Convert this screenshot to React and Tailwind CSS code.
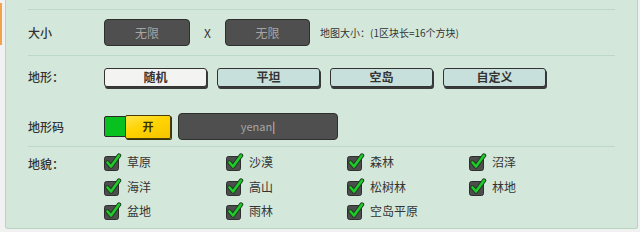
import React from 'react';

function Check() {
  return (
    <svg width="20" height="18" viewBox="0 0 20 18" className="shrink-0">
      <rect x="0.5" y="3.5" width="14" height="14" rx="2" fill="#4d4d4d" stroke="#2e2e2e" strokeWidth="1" />
      <path d="M3.5 9.5 L7 13.5 L15 2.5" fill="none" stroke="#1f3a1f" strokeWidth="4.4" strokeLinecap="round" strokeLinejoin="round" />
      <path d="M3.5 9.5 L7 13.5 L15 2.5" fill="none" stroke="#1ecb2a" strokeWidth="2.6" strokeLinecap="round" strokeLinejoin="round" />
    </svg>
  );
}

function Biome({ name }) {
  return (
    <div className="flex items-center gap-[3px] h-[18px]">
      <Check />
      <span className="text-[12px] leading-none text-[#333]">{name}</span>
    </div>
  );
}

export default function App() {
  const terrains = ['随机', '平坦', '空岛', '自定义'];
  const biomes = ['草原', '沙漠', '森林', '沼泽', '海洋', '高山', '松树林', '林地', '盆地', '雨林', '空岛平原'];

  return (
    <div
      className="relative w-[640px] h-[232px] bg-[#f1f1f1] overflow-hidden"
      style={{ fontFamily: '"Noto Sans CJK SC", "Noto Sans", sans-serif' }}
    >
      <div className="absolute left-0 top-[3px] w-[2px] h-[42px] bg-[#f2a24a]" />

      <div className="ml-[5px] w-[633px] h-[229px] bg-[#d3e8db] border-x border-b border-[#b9d3c3] rounded-b-[3px] pl-[22px] pr-[22px]">
        <div className="h-[9px]" />
        <div className="h-px bg-[#bcd8c7]" />

        {/* size row */}
        <div className="flex items-center mt-[9px] h-[27px]">
          <div className="w-[76px] text-[12px] font-medium text-[#333]">大小</div>
          <div className="w-[86px] h-[27px] flex items-center justify-center bg-[#4f4f4f] border border-[#2f2f2f] rounded-[4px] text-[12px] text-[#a5a5a5]">无限</div>
          <div className="w-[35px] text-center text-[12px] text-[#333]">X</div>
          <div className="w-[85px] h-[27px] flex items-center justify-center bg-[#4f4f4f] border border-[#2f2f2f] rounded-[4px] text-[12px] text-[#a5a5a5]">无限</div>
          <div className="ml-[10px] text-[10px] text-[#333] whitespace-nowrap">地图大小：(1区块长=16个方块)</div>
        </div>

        <div className="h-px bg-[#bcd8c7] mt-[9px]" />

        {/* terrain row */}
        <div className="flex items-center mt-[11px] h-[20px]">
          <div className="w-[76px] text-[12px] font-medium text-[#333]">地形：</div>
          <div className="flex gap-[10px]">
            {terrains.map((t, i) => (
              <div
                key={t}
                className={
                  'w-[103px] h-[19px] flex items-center justify-center rounded-[3px] border border-[#333] shadow-[1px_2px_0_#3a3a3a] text-[12px] font-bold leading-none text-[#333] ' +
                  (i === 0 ? 'bg-[#f3f3f1]' : 'bg-[#c8e0dc]')
                }
              >
                {t}
              </div>
            ))}
          </div>
        </div>

        {/* seed row */}
        <div className="flex items-center mt-[26px] h-[27px]">
          <div className="w-[76px] text-[12px] font-medium text-[#333]">地形码</div>
          <div className="flex items-center">
            <div className="w-[22px] h-[21px] bg-[#08c01e] border border-[#2a2a2a] rounded-l-[2px]" />
            <div className="-ml-px w-[46px] h-[24px] flex items-center justify-center bg-[linear-gradient(160deg,#ffe34a_0%,#ffd400_45%,#f3c400_100%)] border border-[#4a3c08] rounded-[2px] shadow-[1px_1px_0_#3a3206] text-[11px] font-bold text-[#3a3000]">开</div>
          </div>
          <div className="ml-[7px] w-[160px] h-[27px] flex items-center justify-center bg-[#4f4f4f] border border-[#2f2f2f] rounded-[4px] text-[11px] text-[#a5a5a5]">
            yenan<span className="text-[#dcdcdc] -mt-px">|</span>
          </div>
        </div>

        <div className="h-px bg-[#bcd8c7] mt-[6px]" />

        {/* biome row */}
        <div className="flex mt-[6px]">
          <div className="w-[76px] text-[12px] font-medium text-[#333] pt-[2px]">地貌：</div>
          <div className="grid grid-cols-[122px_121px_122px_100px] gap-y-[6.5px]">
            {biomes.map((b) => (
              <Biome key={b} name={b} />
            ))}
          </div>
        </div>
      </div>
    </div>
  );
}
